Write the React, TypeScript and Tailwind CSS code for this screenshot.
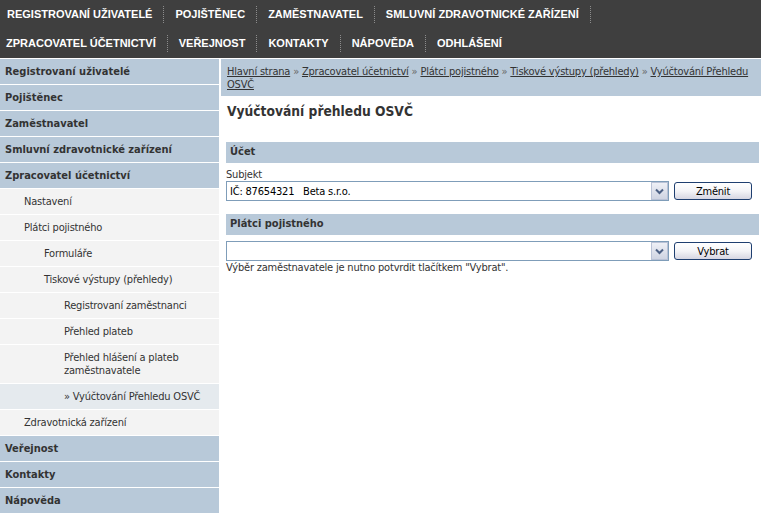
import React from "react";

const navRow1 = ["REGISTROVANÍ UŽIVATELÉ", "POJIŠTĚNEC", "ZAMĚSTNAVATEL", "SMLUVNÍ ZDRAVOTNICKÉ ZAŘÍZENÍ"];
const navRow2 = ["ZPRACOVATEL ÚČETNICTVÍ", "VEŘEJNOST", "KONTAKTY", "NÁPOVĚDA", "ODHLÁŠENÍ"];

function NavRow({ items, sepLast, first }: { items: string[]; sepLast: boolean; first: string }) {
  return (
    <div className="flex items-center h-[29px]">
      {items.map((t, i) => (
        <React.Fragment key={t}>
          <span className={(i === 0 ? first : "pl-[11px]") + " pr-[11px] text-white font-bold text-[11px] font-['Liberation_Sans',Arial,sans-serif] leading-none"}>
            {t}
          </span>
          {(i < items.length - 1 || sepLast) && (
            <span className="h-[17px] border-l border-dotted border-[#8c8c8c]" />
          )}
        </React.Fragment>
      ))}
    </div>
  );
}

type Item = { label: string; level: number; active?: boolean };

const side: Item[] = [
  { label: "Registrovaní uživatelé", level: 0 },
  { label: "Pojištěnec", level: 0 },
  { label: "Zaměstnavatel", level: 0 },
  { label: "Smluvní zdravotnické zařízení", level: 0 },
  { label: "Zpracovatel účetnictví", level: 0 },
  { label: "Nastavení", level: 1 },
  { label: "Plátci pojistného", level: 1 },
  { label: "Formuláře", level: 2 },
  { label: "Tiskové výstupy (přehledy)", level: 2 },
  { label: "Registrovaní zaměstnanci", level: 3 },
  { label: "Přehled plateb", level: 3 },
  { label: "Přehled hlášení a plateb zaměstnavatele", level: 3 },
  { label: "» Vyúčtování Přehledu OSVČ", level: 3, active: true },
  { label: "Zdravotnická zařízení", level: 1 },
  { label: "Veřejnost", level: 0 },
  { label: "Kontakty", level: 0 },
  { label: "Nápověda", level: 0 },
];

function SideItem({ it }: { it: Item }) {
  if (it.level === 0) {
    return (
      <div className="bg-[#b8c9d9] border-b border-white pl-[5px] pr-[4px] py-[6px] leading-[13px] font-bold text-[#333333]">
        {it.label}
      </div>
    );
  }
  const pad = it.level === 1 ? "pl-[24px]" : it.level === 2 ? "pl-[44px]" : "pl-[64px]";
  const pr = it.level === 3 && !it.active ? "pr-[20px]" : "pr-[4px]";
  return (
    <div
      className={
        (it.active ? "bg-[#e5eaee] " : "bg-[#f3f3f3] ") +
        pad +
        " " +
        pr +
        " border-b border-white py-[6px] leading-[13px] text-[#333333] tracking-[-0.2px]"
      }
    >
      {it.label}
    </div>
  );
}

function Select({ value }: { value: string }) {
  return (
    <div className="flex-1 h-[20px] border border-[#7f9db9] bg-white flex items-center">
      <span className="flex-1 pl-[3px] text-black whitespace-pre leading-none tracking-[-0.2px]">{value}</span>
      <span className="w-[17px] h-[18px] border border-[#b9c2d6] bg-gradient-to-b from-[#eef0f6] to-[#cfd4e2] flex items-center justify-center">
        <svg width="9" height="7" viewBox="0 0 9 7">
          <path d="M1 1.5 L4.5 5 L8 1.5" fill="none" stroke="#4d6185" strokeWidth="2" />
        </svg>
      </span>
    </div>
  );
}

function Btn({ label }: { label: string }) {
  return (
    <button className="ml-[5px] w-[78px] h-[18px] rounded-[3px] border border-[#1f3f70] bg-gradient-to-b from-white via-[#f4f4f7] to-[#d6d6e2] text-[11px] leading-none text-black tracking-[-0.2px]">
      {label}
    </button>
  );
}

export default function App() {
  return (
    <div className="w-[761px] h-[514px] overflow-hidden bg-white text-[11px] font-['DejaVu_Sans_Condensed','DejaVu_Sans',sans-serif]">
      <div className="bg-[#3f3f3f] h-[58px] flex flex-col">
        <NavRow items={navRow1} sepLast={true} first="pl-[7px]" />
        <NavRow items={navRow2} sepLast={false} first="pl-[6px]" />
      </div>
      <div className="flex mt-[1px]">
        <div className="w-[219px] shrink-0">
          {side.map((it) => (
            <SideItem key={it.label} it={it} />
          ))}
        </div>
        <div className="flex-1 ml-[2px]">
          <div className="bg-[#b8c9d9] pl-[6px] pr-[6px] pt-[6px] pb-[5px] leading-[13px] text-[#333333] h-[37px] tracking-[-0.2px]">
            <a className="underline">Hlavní strana</a> <span className="text-[#666]">»</span>{" "}
            <a className="underline">Zpracovatel účetnictví</a> <span className="text-[#666]">»</span>{" "}
            <a className="underline">Plátci pojistného</a> <span className="text-[#666]">»</span>{" "}
            <a className="underline">Tiskové výstupy (přehledy)</a> <span className="text-[#666]">»</span>{" "}
            <a className="underline">Vyúčtování Přehledu OSVČ</a>
          </div>
          <div className="pl-[5px] pr-[2px]">
            <h1 className="pl-[1px] mt-[7px] text-[13.7px] font-bold text-[#333333] leading-[16px]">Vyúčtování přehledu OSVČ</h1>
            <div className="mt-[23px] h-[21px] bg-[#b8c9d9] pl-[4px] flex items-center font-bold text-[#333333]">Účet</div>
            <div className="mt-[5px] leading-[13px] text-[#333333] tracking-[-0.2px]">Subjekt</div>
            <div className="flex items-center pr-[7px]">
              <Select value={"IČ: 87654321   Beta s.r.o."} />
              <Btn label="Změnit" />
            </div>
            <div className="mt-[13px] h-[21px] bg-[#b8c9d9] pl-[4px] flex items-center font-bold text-[#333333]">Plátci pojistného</div>
            <div className="mt-[6px] flex items-center pr-[7px]">
              <Select value="" />
              <Btn label="Vybrat" />
            </div>
            <div className="leading-[13px] text-[#333333] tracking-[-0.2px]">
              Výběr zaměstnavatele je nutno potvrdit tlačítkem "Vybrat".
            </div>
          </div>
        </div>
      </div>
    </div>
  );
}
